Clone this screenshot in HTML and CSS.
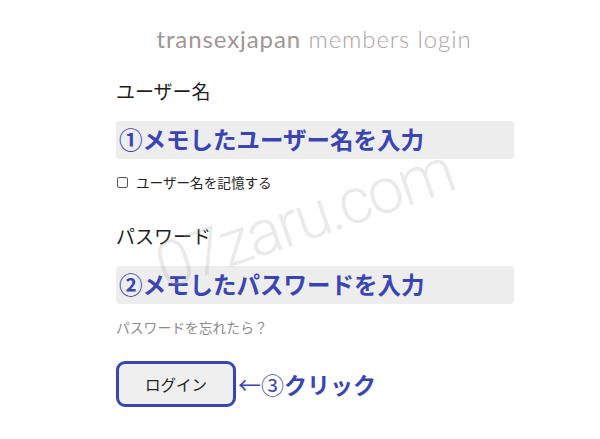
FILE: index.html
```html
<!DOCTYPE html>
<html lang="ja">
<head>
<meta charset="utf-8">
<title>transexjapan members login</title>
<link rel="stylesheet" href="styles.css">
</head>
<body>
<div class="page">
  <h1 class="title"><span class="brand">transexjapan</span> members login</h1>
  <form class="form">
    <label class="label">ユーザー名</label>
    <div class="field"><span class="hint">①メモしたユーザー名を入力</span></div>
    <div class="remember"><span class="box"></span><span>ユーザー名を記憶する</span></div>
    <label class="label label-pw">パスワード</label>
    <div class="field"><span class="hint">②メモしたパスワードを入力</span></div>
    <a class="forgot">パスワードを忘れたら？</a>
    <div class="actions">
      <button type="button" class="btn">ログイン</button>
      <span class="note"><span class="thin">←③</span>クリック</span>
    </div>
  </form>
  <div class="watermark">07zaru.com</div>
</div>
</body>
</html>
```
FILE: styles.css
```css
html, body {
  margin: 0;
  padding: 0;
  background: #fff;
}
.page {
  position: relative;
  width: 600px;
  height: 439px;
  overflow: hidden;
  font-family: "Noto Sans CJK JP", "Noto Sans", sans-serif;
  color: #222;
}
.title {
  margin: 0;
  padding-top: 24px;
  text-align: center;
  font-family: Lato, "Open Sans", sans-serif;
  font-weight: 300;
  font-size: 24px;
  line-height: 30px;
  color: #aaa4a4;
  letter-spacing: 0.9px;
  padding-left: 28px;
}
.brand {
  font-weight: 400;
  color: #a09696;
}
.form {
  display: flex;
  flex-direction: column;
  align-items: flex-start;
  padding-left: 116px;
  width: 398px;
  margin-top: 24px;
}
.label {
  font-size: 19px;
  line-height: 26px;
  font-weight: 400;
  color: #1e1e1e;
}
.field {
  margin-top: 17px;
  width: 398px;
  height: 38px;
  box-sizing: border-box;
  background: #ededed;
  border-radius: 4px;
  display: flex;
  align-items: center;
  padding-left: 3px;
}
.hint {
  font-size: 23.5px;
  font-weight: 700;
  color: #3a45b4;
  line-height: 1;
}
.remember {
  margin-top: 14px;
  display: flex;
  align-items: center;
  gap: 8px;
  font-size: 13.6px;
  line-height: 18px;
  color: #222;
  padding-left: 1px;
}
.box {
  width: 9px;
  height: 9px;
  border: 1px solid #555;
  border-radius: 2px;
}
.label-pw {
  margin-top: 32px;
}
.forgot {
  margin-top: 14px;
  font-size: 13.8px;
  line-height: 18px;
  color: #8c8c8c;
}
.actions {
  margin-top: 25px;
  display: flex;
  align-items: center;
  gap: 2px;
}
.btn {
  width: 120px;
  height: 46px;
  box-sizing: border-box;
  border: 3px solid #3a45b4;
  border-radius: 9px;
  background: #efefef;
  font-family: "Noto Sans CJK JP", sans-serif;
  font-size: 15.5px;
  color: #222;
  padding: 0;
}
.note {
  font-size: 23px;
  font-weight: 700;
  color: #3a45b4;
  line-height: 1;
}
.thin {
  font-weight: 400;
}
.watermark {
  position: absolute;
  left: 168px;
  top: 238px;
  font-family: Roboto, "Open Sans", sans-serif;
  font-weight: 300;
  font-size: 64px;
  line-height: 60px;
  letter-spacing: -2.5px;
  color: rgba(170, 170, 170, 0.25);
  transform: rotate(-19deg);
  transform-origin: left bottom;
  white-space: nowrap;
  pointer-events: none;
}
```
